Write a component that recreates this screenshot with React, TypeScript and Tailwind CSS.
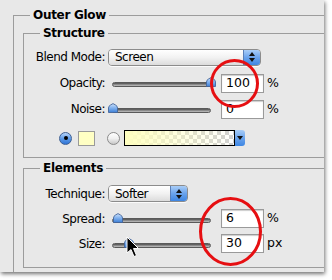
import React from "react";

const font = "font-['DejaVu_Sans',sans-serif]";
const txt = "text-[12px] tracking-[-0.5px]";

function Thumb() {
  return (
    <svg width="10" height="10" viewBox="0 0 10 10">
      <defs>
        <linearGradient id="tg" x1="0" y1="0" x2="0" y2="1">
          <stop offset="0" stopColor="#cfe3fb" />
          <stop offset="0.5" stopColor="#7fb0ee" />
          <stop offset="1" stopColor="#3d7fd6" />
        </linearGradient>
      </defs>
      <path d="M0.5 9.5 L0.5 5 Q0.5 3 2.5 2 L5 0.6 L7.5 2 Q9.5 3 9.5 5 L9.5 9.5 Z" fill="url(#tg)" stroke="#44659a" strokeWidth="0.9" />
    </svg>
  );
}

function Slider({ pos }: { pos: number }) {
  return (
    <div className="relative w-[107px] h-[14px]">
      <div className="absolute left-[4px] top-[6px] w-[99px] h-[5px] rounded-full bg-gradient-to-b from-[#4e4e4e] via-[#8a8a8a] to-[#c4c4c4] border border-[#5a5a5a]" />
      <div className="absolute top-[1px]" style={{ left: pos - 5 }}>
        <Thumb />
      </div>
    </div>
  );
}

function Field({ value, unit }: { value: string; unit: string }) {
  return (
    <div className="flex items-center ml-[6px]">
      <div className="w-[43px] h-[19px] bg-white border border-[#9a9a9a] shadow-[inset_0_1px_1px_rgba(0,0,0,0.2)] flex items-center pl-[4px] text-[12.5px] text-black leading-none">
        {value}
      </div>
      <span className="ml-[3px] text-[12.5px] text-black">{unit}</span>
    </div>
  );
}

function Select({ value, width }: { value: string; width: string }) {
  return (
    <div className={`${width} h-[17px] flex rounded-[4px] border border-[#8c8c8c] overflow-hidden shadow-[0_1px_0_rgba(255,255,255,0.8)]`}>
      <div className={`flex-1 bg-gradient-to-b from-white via-[#f2f2f2] to-[#dcdcdc] flex items-center pl-[6px] ${txt} text-black leading-none`}>
        {value}
      </div>
      <div className="w-[17px] bg-gradient-to-b from-[#a9cdf7] via-[#6aa3ec] to-[#3d86e3] border-l border-[#5a7fb8] flex flex-col items-center justify-center gap-[2px]">
        <svg width="6" height="4" viewBox="0 0 6 4"><path d="M3 0 L6 4 L0 4 Z" fill="#111" /></svg>
        <svg width="6" height="4" viewBox="0 0 6 4"><path d="M0 0 L6 0 L3 4 Z" fill="#111" /></svg>
      </div>
    </div>
  );
}

function Row({ label, children, h = "h-[26px]" }: { label: string; children: React.ReactNode; h?: string }) {
  return (
    <div className={`flex items-center ${h}`}>
      <div className={`w-[81px] text-right ${txt} text-black whitespace-nowrap`}>{label}</div>
      <div className="ml-[3px] flex items-center">{children}</div>
    </div>
  );
}

function Radio({ on }: { on: boolean }) {
  return on ? (
    <div className="w-[13px] h-[13px] rounded-full border border-[#3d5f93] bg-gradient-to-b from-[#b9d6fa] via-[#5d9be8] to-[#2f74d6] flex items-center justify-center">
      <div className="w-[4px] h-[4px] rounded-full bg-black" />
    </div>
  ) : (
    <div className="w-[13px] h-[13px] rounded-full border border-[#8a8a8a] bg-gradient-to-b from-white via-[#f0f0f0] to-[#c8c8c8]" />
  );
}

const legend = "px-[3px] text-[12px] tracking-[-0.3px] font-bold leading-[16px] text-black";

export default function App() {
  return (
    <div className={`relative w-[332px] h-[280px] bg-white overflow-hidden ${font}`}>
      <div className="w-[324px] h-[272px] bg-[#e8e8e8] overflow-hidden shadow-[1px_2px_4px_rgba(0,0,0,0.55)] pt-[7px] pl-[13px]">
        <fieldset className="w-[340px] h-[300px] border-l border-t border-[#9c9c9c] pl-[9px]">
          <legend className={`ml-[7px] ${legend}`}>Outer Glow</legend>
          <fieldset className="mt-[2px] w-[330px] border-l border-t border-b border-[#9c9c9c] pt-[3px] pb-[5px]">
            <legend className={`ml-[16px] ${legend}`}>Structure</legend>
            <Row label="Blend Mode:">
              <Select value="Screen" width="w-[153px]" />
            </Row>
            <Row label="Opacity:">
              <Slider pos={103} />
              <Field value="100" unit="%" />
            </Row>
            <Row label="Noise:">
              <Slider pos={5} />
              <Field value="0" unit="%" />
            </Row>
            <div className="flex items-center h-[30px] pt-[2px] pl-[35px]">
              <Radio on />
              <div className="ml-[6px] w-[17px] h-[15px] bg-[#ffffc4] border border-[#9a9a9a]" />
              <div className="ml-[12px]">
                <Radio on={false} />
              </div>
              <div className="ml-[4px] flex h-[16px]">
                <div className="w-[111px] h-[16px] border border-black bg-[conic-gradient(#d0d0d0_25%,#ffffff_0_50%,#d0d0d0_0_75%,#ffffff_0)] bg-[length:8px_8px]">
                  <div className="w-full h-full bg-gradient-to-r from-[#ffffc0] to-transparent" />
                </div>
                <div className="w-[10px] h-[16px] bg-gradient-to-b from-[#a9cdf7] via-[#6aa3ec] to-[#3d86e3] rounded-r-[3px] flex items-center justify-center">
                  <svg width="6" height="4" viewBox="0 0 6 4"><path d="M0 0 L6 0 L3 4 Z" fill="#111" /></svg>
                </div>
              </div>
            </div>
          </fieldset>
          <fieldset className="mt-[2px] w-[330px] border-l border-t border-b border-[#9c9c9c] pt-[5px] pb-[11px]">
            <legend className={`ml-[16px] ${legend}`}>Elements</legend>
            <Row label="Technique:" h="h-[25px]">
              <Select value="Softer" width="w-[80px]" />
            </Row>
            <Row label="Spread:" h="h-[25px]">
              <Slider pos={10} />
              <Field value="6" unit="%" />
            </Row>
            <Row label="Size:" h="h-[25px]">
              <Slider pos={21} />
              <Field value="30" unit="px" />
            </Row>
          </fieldset>
        </fieldset>
      </div>
      <svg className="absolute left-0 top-0 pointer-events-none" width="332" height="280">
        <ellipse cx="234.5" cy="83.5" rx="23" ry="23" fill="none" stroke="#e60f12" strokeWidth="3" />
        <ellipse cx="230.5" cy="231.5" rx="30" ry="33" fill="none" stroke="#e60f12" strokeWidth="3" />
        <path d="M127 237 L127 253 L131 249.5 L134 256.5 L136.5 255.5 L133.5 248.5 L138.5 248.5 Z" fill="#000" stroke="#fff" strokeWidth="1" strokeLinejoin="round" />
      </svg>
    </div>
  );
}
